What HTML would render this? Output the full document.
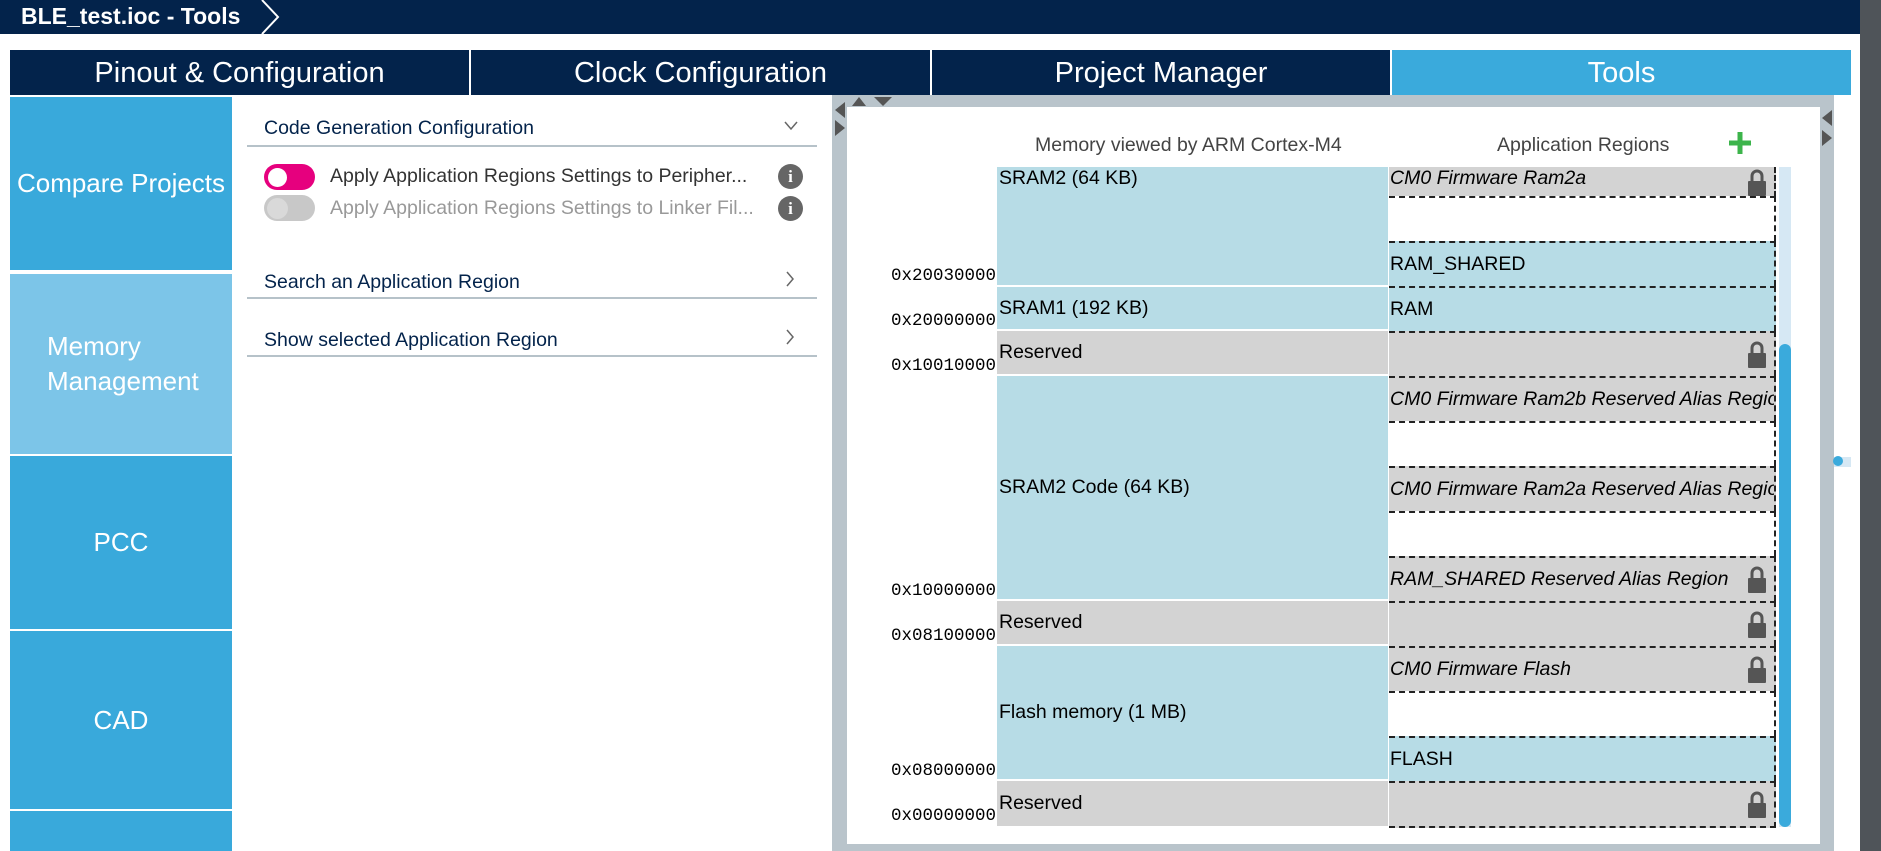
<!DOCTYPE html>
<html><head><meta charset="utf-8"><style>
*{margin:0;padding:0;box-sizing:border-box}
html,body{width:1881px;height:851px;overflow:hidden;background:#fff}
body{font-family:"Liberation Sans",sans-serif;position:relative}
.a{position:absolute}
.tab{position:absolute;top:50px;height:45px;color:#fff;font-size:29px;text-align:center;line-height:47px;background:#03234b}
.side{position:absolute;left:10px;width:222px;color:#fff;font-size:26px;display:flex;align-items:center;justify-content:center;background:#39a9db}
.row{position:absolute;left:264px;font-size:19.5px;color:#03234b}
.line{position:absolute;left:247px;width:570px;height:2px;background:#b6c2c9}
.mem{position:absolute;left:997px;width:391px;font-size:19.5px;color:#000;display:flex;align-items:center;padding-left:2px;border-bottom:2px solid #fff}
.addr{position:absolute;left:866px;width:130px;text-align:right;font-family:"Liberation Mono",monospace;font-size:17.5px;color:#000}
.app{position:absolute;left:1389px;width:387px;height:45px;border-top:2px dashed #222;border-right:2px dashed #222;font-size:19.5px;display:flex;align-items:center;padding-left:1px;overflow:hidden;white-space:nowrap}
.g{background:#d3d3d3}.b{background:#b7dce6}.w{background:#fff}
.i{font-style:italic}
.lock{position:absolute;right:7px;top:50%;margin-top:-14px;width:20px;height:27px}
.info{position:absolute;left:778px;width:25px;height:25px;border-radius:50%;background:#666;color:#fff;font-size:17px;font-weight:bold;text-align:center;line-height:25px;font-family:"Liberation Serif",serif}
</style></head><body>
<div class="a" style="left:0;top:0;width:1866px;height:34px;background:#03234b"></div>
<div class="a" style="left:21px;top:3px;color:#fff;font-size:23px;font-weight:bold">BLE_test.ioc - Tools</div>
<svg class="a" style="left:258px;top:0" width="26" height="34"><path d="M4 0 L20 17 L4 34" stroke="#fff" stroke-width="2" fill="none"/></svg>

<div class="tab" style="left:10px;width:459px">Pinout &amp; Configuration</div>
<div class="tab" style="left:471px;width:459px">Clock Configuration</div>
<div class="tab" style="left:932px;width:458px">Project Manager</div>
<div class="tab" style="left:1392px;width:459px;background:#3aaadc">Tools</div>

<div class="side" style="top:97px;height:173px">Compare Projects</div>
<div class="side" style="top:274px;height:180px;background:#7cc5e8;justify-content:flex-start;padding-left:37px;line-height:35px">Memory<br>Management</div>
<div class="side" style="top:456px;height:173px">PCC</div>
<div class="side" style="top:631px;height:178px">CAD</div>
<div class="side" style="top:811px;height:40px"></div>

<div class="row" style="top:117px">Code Generation Configuration</div>
<svg class="a" style="left:783px;top:120px" width="16" height="12"><path d="M2 2 L8 9 L14 2" stroke="#666" stroke-width="1.5" fill="none"/></svg>
<div class="line" style="top:145px"></div>
<div class="a" style="left:264px;top:164px;width:51px;height:26px;border-radius:13px;background:#e6007e"></div>
<div class="a" style="left:268px;top:168px;width:19px;height:19px;border-radius:50%;background:#fff"></div>
<div class="row" style="left:330px;top:165px;color:#333">Apply Application Regions Settings to Peripher...</div>
<div class="info" style="top:164px">i</div>
<div class="a" style="left:264px;top:195px;width:51px;height:26px;border-radius:13px;background:#c8c8c8"></div>
<div class="a" style="left:267px;top:198px;width:21px;height:21px;border-radius:50%;background:#d9d9d9"></div>
<div class="row" style="left:330px;top:197px;color:#999">Apply Application Regions Settings to Linker Fil...</div>
<div class="info" style="top:196px">i</div>
<div class="row" style="top:271px">Search an Application Region</div>
<svg class="a" style="left:784px;top:270px" width="12" height="18"><path d="M3 2 L9 9 L3 16" stroke="#666" stroke-width="1.5" fill="none"/></svg>
<div class="line" style="top:297px"></div>
<div class="row" style="top:329px">Show selected Application Region</div>
<svg class="a" style="left:784px;top:328px" width="12" height="18"><path d="M3 2 L9 9 L3 16" stroke="#666" stroke-width="1.5" fill="none"/></svg>
<div class="line" style="top:355px"></div>

<div class="a" style="left:832px;top:95px;width:1002px;height:756px;background:#b9c4cb"></div>
<div class="a" style="left:847px;top:107px;width:973px;height:737px;background:#fff"></div>
<svg class="a" style="left:832px;top:95px" width="70" height="50"><path d="M13 7 L3 15 L13 23Z M3 25 L13 33 L3 41Z M20 11 L27 2 L34 11Z M42 2 L60 2 L51 11Z" fill="#555"/></svg>
<svg class="a" style="left:1820px;top:105px" width="14" height="50"><path d="M12 5 L2 13 L12 21Z M2 25 L12 33 L2 41Z" fill="#555"/></svg>
<div class="a" style="left:1834px;top:105px;width:17px;height:746px;background:#fff"></div>
<div class="a" style="left:1834px;top:457px;width:17px;height:10px;background:#d6e8f4"></div>
<div class="a" style="left:1833px;top:456px;width:10px;height:10px;border-radius:50%;background:#3aaadc"></div>
<div class="a" style="right:0;top:0;width:21px;height:851px;background:#4f5459"></div>

<div class="a" style="left:1035px;top:134px;font-size:19.5px;color:#444">Memory viewed by ARM Cortex-M4</div>
<div class="a" style="left:1497px;top:134px;font-size:19.5px;color:#444">Application Regions</div>
<svg class="a" style="left:1728px;top:131px" width="24" height="24"><path d="M12 1 V23 M1 12 H23" stroke="#3cb44b" stroke-width="5"/></svg>

<div class="mem b" style="top:167px;height:120px;align-items:flex-start">SRAM2 (64 KB)</div>
<div class="mem b" style="top:287px;height:44px">SRAM1 (192 KB)</div>
<div class="mem g" style="top:331px;height:45px">Reserved</div>
<div class="mem b" style="top:376px;height:225px">SRAM2 Code (64 KB)</div>
<div class="mem g" style="top:601px;height:45px">Reserved</div>
<div class="mem b" style="top:646px;height:135px">Flash memory (1 MB)</div>
<div class="mem g" style="top:781px;height:45px;border-bottom:0">Reserved</div>

<div class="addr" style="top:266px">0x20030000</div>
<div class="addr" style="top:311px">0x20000000</div>
<div class="addr" style="top:356px">0x10010000</div>
<div class="addr" style="top:581px">0x10000000</div>
<div class="addr" style="top:626px">0x08100000</div>
<div class="addr" style="top:761px">0x08000000</div>
<div class="addr" style="top:806px">0x00000000</div>

<div class="app g i" style="top:167px;height:30px;border-top:0;align-items:flex-start">CM0 Firmware Ram2a<svg class="lock" style="top:2px;margin-top:0"><path d="M5 12 V7 A5 5 0 0 1 15 7 V12" stroke="#555" stroke-width="3" fill="none"/><rect x="1" y="12" width="18" height="15" rx="1" fill="#555"/></svg></div>
<div class="app w" style="top:196px"></div>
<div class="app b" style="top:241px">RAM_SHARED</div>
<div class="app b" style="top:286px">RAM</div>
<div class="app g" style="top:331px"><svg class="lock"><path d="M5 12 V7 A5 5 0 0 1 15 7 V12" stroke="#555" stroke-width="3" fill="none"/><rect x="1" y="12" width="18" height="15" rx="1" fill="#555"/></svg></div>
<div class="app g i" style="top:376px">CM0 Firmware Ram2b Reserved Alias Region</div>
<div class="app w" style="top:421px"></div>
<div class="app g i" style="top:466px">CM0 Firmware Ram2a Reserved Alias Region</div>
<div class="app w" style="top:511px"></div>
<div class="app g i" style="top:556px">RAM_SHARED Reserved Alias Region<svg class="lock"><path d="M5 12 V7 A5 5 0 0 1 15 7 V12" stroke="#555" stroke-width="3" fill="none"/><rect x="1" y="12" width="18" height="15" rx="1" fill="#555"/></svg></div>
<div class="app g" style="top:601px"><svg class="lock"><path d="M5 12 V7 A5 5 0 0 1 15 7 V12" stroke="#555" stroke-width="3" fill="none"/><rect x="1" y="12" width="18" height="15" rx="1" fill="#555"/></svg></div>
<div class="app g i" style="top:646px">CM0 Firmware Flash<svg class="lock"><path d="M5 12 V7 A5 5 0 0 1 15 7 V12" stroke="#555" stroke-width="3" fill="none"/><rect x="1" y="12" width="18" height="15" rx="1" fill="#555"/></svg></div>
<div class="app w" style="top:691px"></div>
<div class="app b" style="top:736px">FLASH</div>
<div class="app g" style="top:781px;border-bottom:2px dashed #222;height:47px"><svg class="lock"><path d="M5 12 V7 A5 5 0 0 1 15 7 V12" stroke="#555" stroke-width="3" fill="none"/><rect x="1" y="12" width="18" height="15" rx="1" fill="#555"/></svg></div>

<div class="a" style="left:1779px;top:167px;width:12px;height:660px;background:#d6e8f4"></div>
<div class="a" style="left:1779px;top:344px;width:12px;height:483px;border-radius:6px;background:#3aaadc"></div>
</body></html>
